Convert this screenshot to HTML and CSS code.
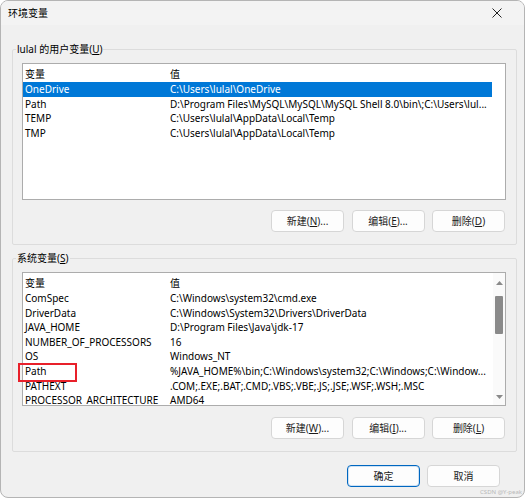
FILE: index.html
```html
<!DOCTYPE html>
<html lang="zh-CN">
<head>
<meta charset="utf-8">
<title>环境变量</title>
<link rel="stylesheet" href="styles.css">
</head>
<body>
<div class="window">
  <div class="titlebar">
    <span class="title">环境变量</span>
    <svg class="close" width="10" height="10" viewBox="0 0 10 10"><path d="M0.5 0.5 L9.5 9.5 M9.5 0.5 L0.5 9.5" stroke="#222" stroke-width="1" fill="none"/></svg>
  </div>
  <div class="content">
    <fieldset class="group">
      <legend>lulal 的用户变量(<u>U</u>)</legend>
      <div class="list user-list">
        <div class="rows">
          <div class="row head"><span class="c1">变量</span><span class="c2">值</span></div>
          <div class="row selected"><span class="c1">OneDrive</span><span class="c2">C:\Users\lulal\OneDrive</span></div>
          <div class="row"><span class="c1">Path</span><span class="c2">D:\Program Files\MySQL\MySQL\MySQL Shell 8.0\bin\;C:\Users\lul...</span></div>
          <div class="row"><span class="c1">TEMP</span><span class="c2">C:\Users\lulal\AppData\Local\Temp</span></div>
          <div class="row"><span class="c1">TMP</span><span class="c2">C:\Users\lulal\AppData\Local\Temp</span></div>
        </div>
      </div>
      <div class="btns">
        <button class="btn">新建(<u>N</u>)...</button>
        <button class="btn">编辑(<u>E</u>)...</button>
        <button class="btn">删除(<u>D</u>)</button>
      </div>
    </fieldset>

    <fieldset class="group sys">
      <legend>系统变量(<u>S</u>)</legend>
      <div class="list sys-list">
        <div class="rows">
          <div class="row head"><span class="c1">变量</span><span class="c2">值</span></div>
          <div class="row"><span class="c1">ComSpec</span><span class="c2">C:\Windows\system32\cmd.exe</span></div>
          <div class="row"><span class="c1">DriverData</span><span class="c2">C:\Windows\System32\Drivers\DriverData</span></div>
          <div class="row"><span class="c1">JAVA_HOME</span><span class="c2">D:\Program Files\Java\jdk-17</span></div>
          <div class="row"><span class="c1">NUMBER_OF_PROCESSORS</span><span class="c2">16</span></div>
          <div class="row"><span class="c1">OS</span><span class="c2">Windows_NT</span></div>
          <div class="row marked"><span class="c1">Path</span><span class="c2">%JAVA_HOME%\bin;C:\Windows\system32;C:\Windows;C:\Window...</span><span class="redbox"></span></div>
          <div class="row"><span class="c1">PATHEXT</span><span class="c2">.COM;.EXE;.BAT;.CMD;.VBS;.VBE;.JS;.JSE;.WSF;.WSH;.MSC</span></div>
          <div class="row"><span class="c1">PROCESSOR_ARCHITECTURE</span><span class="c2">AMD64</span></div>
        </div>
        <div class="scrollbar">
          <svg class="arrow" width="7" height="4" viewBox="0 0 7 4"><path d="M0 4 L3.5 0 L7 4 Z" fill="#8a8a8a"/></svg>
          <div class="track"><div class="thumb"></div></div>
          <svg class="arrow" width="7" height="4" viewBox="0 0 7 4"><path d="M0 0 L3.5 4 L7 0 Z" fill="#8a8a8a"/></svg>
        </div>
      </div>
      <div class="btns">
        <button class="btn">新建(<u>W</u>)...</button>
        <button class="btn">编辑(<u>I</u>)...</button>
        <button class="btn">删除(<u>L</u>)</button>
      </div>
    </fieldset>

    <div class="footer">
      <button class="btn default">确定</button>
      <button class="btn">取消</button>
    </div>
  </div>
  <div class="watermark">CSDN @Y-peak</div>
</div>
</body>
</html>
```

FILE: styles.css
```css
* { box-sizing: border-box; }

html, body {
  margin: 0;
  padding: 0;
  background: #ffffff;
}

body {
  font-family: "Noto Sans", "Noto Sans CJK SC", sans-serif;
  font-size: 10px;
  color: #000;
  width: 528px;
  height: 500px;
  overflow: hidden;
}

.window {
  position: relative;
  width: 525px;
  height: 498px;
  background: #f0f0f0;
  border: 1px solid #b4b4b4;
  border-radius: 8px;
  display: flex;
  flex-direction: column;
  overflow: hidden;
}

.titlebar {
  height: 24px;
  display: flex;
  align-items: center;
  justify-content: space-between;
  padding: 0 22px 0 7px;
  background: #f3f3f3;
}

.title {
  font-size: 10px;
  line-height: 14px;
}

.close {
  display: block;
}

.content {
  padding: 17px 7px 0 11px;
  display: flex;
  flex-direction: column;
}

.group {
  margin: 0;
  width: 505px;
  border: 1px solid #dcdcdc;
  border-radius: 2px;
  padding: 7px 10px 12px 9px;
  min-width: 0;
}

.group legend {
  padding: 0 1px;
  margin-left: -6px;
  line-height: 14px;
  height: 14px;
}

.group.sys {
  margin-top: 6px;
}

.list {
  background: #ffffff;
  border: 1px solid #acacac;
  display: flex;
  overflow: hidden;
  position: relative;
}

.user-list {
  height: 137px;
}

.sys-list {
  height: 134px;
  overflow: visible;
}

.rows {
  flex: 1;
  display: flex;
  flex-direction: column;
  min-width: 0;
}

.row {
  display: flex;
  height: 14.6px;
  line-height: 14.6px;
  width: 469px;
  white-space: nowrap;
  flex-shrink: 0;
  position: relative;
}

.row.head {
  height: 18px;
  line-height: 18px;
  padding-top: 1px;
}

.row.selected {
  background: #0078d7;
  color: #ffffff;
}

.c1 {
  width: 144px;
  padding-left: 2px;
  overflow: hidden;
  flex-shrink: 0;
}

.c2 {
  flex: 1;
  padding-left: 3px;
  overflow: hidden;
}

.redbox {
  position: absolute;
  left: -5px;
  top: -1px;
  width: 59px;
  height: 19px;
  border: 2.5px solid #e8202a;
}

.sys-list .rows {
  overflow: visible;
  height: 132px;
  clip-path: inset(0 -10px 0 -10px);
}

.scrollbar {
  width: 12px;
  flex-shrink: 0;
  display: flex;
  flex-direction: column;
  align-items: center;
  padding: 8px 0 6px;
  background: #fafafa;
}

.scrollbar .arrow {
  display: block;
  flex-shrink: 0;
}

.track {
  flex: 1;
  width: 100%;
  display: flex;
  justify-content: center;
  padding-top: 11px;
}

.thumb {
  width: 8px;
  height: 38px;
  background: #8a8a8a;
  border-radius: 1px;
}

.btns {
  display: flex;
  justify-content: flex-end;
  gap: 7.5px;
  margin-top: 10px;
  padding-right: 1px;
}

.sys .btns {
  margin-top: 11px;
}

.btn {
  font-family: inherit;
  font-size: 10px;
  color: #1b1b1b;
  width: 73px;
  height: 22px;
  padding: 0;
  background: #fdfdfd;
  border: 1px solid #d6d6d6;
  border-radius: 4px;
  line-height: 20px;
}

.btn u {
  text-decoration: underline;
}

.footer {
  display: flex;
  justify-content: flex-end;
  gap: 7px;
  margin-top: 13px;
  padding-right: 17px;
}

.btn.default {
  border: 1px solid #0067c0;
  box-shadow: inset 0 0 0 1px #cfe2f4;
}

.watermark {
  position: absolute;
  right: 2px;
  bottom: 1px;
  font-size: 6px;
  line-height: 7px;
  color: #b8b8b8;
}
```
